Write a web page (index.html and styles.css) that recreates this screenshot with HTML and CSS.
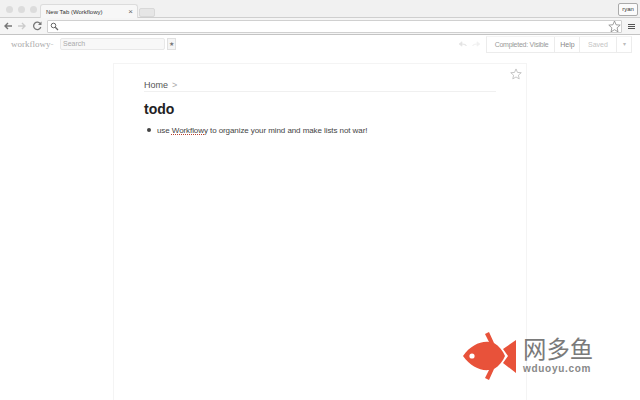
FILE: index.html
```html
<!DOCTYPE html>
<html lang="en">
<head>
<meta charset="utf-8">
<title>New Tab (Workflowy)</title>
<link rel="stylesheet" href="styles.css">
</head>
<body>
<div class="tabstrip">
  <div class="lights"><i></i><i></i><i></i></div>
  <div class="tab"><span class="tab-title">New Tab (Workflowy)</span><span class="tab-x">×</span></div>
  <div class="newtab"></div>
  <div class="user">ryan</div>
</div>
<div class="toolbar">
  <svg class="nav" width="45" height="16" viewBox="0 0 45 16">
    <path d="M3 8h7M6 5 3 8l3 3" fill="none" stroke="#777" stroke-width="1.400"/>
    <path d="M16 8h7M20 5l3 3-3 3" fill="none" stroke="#ccc" stroke-width="1.400"/>
    <path d="M38.500 6a3.700 3.700 0 1 0 .3 3" fill="none" stroke="#777" stroke-width="1.300"/>
    <path d="M39.500 3.500v3.500h-3.500z" fill="#777"/>
  </svg>
  <div class="omnibox">
    <svg width="9" height="9" viewBox="0 0 9 9"><circle cx="3.500" cy="3.500" r="2.300" fill="none" stroke="#666"/><path d="M5.300 5.300 8 8" stroke="#666" stroke-width="1.300"/></svg>
    <svg class="omni-star" width="13" height="13" viewBox="0 0 13 13"><path d="M6.500 1 8.100 4.800 12.200 5.100 9.100 7.800 10 11.800 6.500 9.700 3 11.800 3.900 7.800 .8 5.100 4.900 4.800Z" fill="#fff" stroke="#888" stroke-width=".8"/></svg>
  </div>
  <div class="menu"><i></i><i></i><i></i></div>
</div>
<div class="wf-header">
  <span class="logo">workflowy<span class="logo-dot">-</span></span>
  <div class="search">Search</div>
  <div class="star-btn">★</div>
  <div class="spacer"></div>
  <svg class="undo" width="24" height="8" viewBox="0 0 24 8">
    <path d="M1 4 4 1.800V6.200ZM4 4c3 0 4 .5 4.500 2" fill="#e4e4e4" stroke="#e4e4e4" stroke-width=".7"/>
    <path d="M22 4 19 1.800V6.200ZM19 4c-3 0-4 .5-4.500 2" fill="#f0f0f0" stroke="#f0f0f0" stroke-width=".7"/>
  </svg>
  <div class="actions">
    <span class="act completed">Completed: Visible</span>
    <span class="act help">Help</span>
    <span class="act saved">Saved</span>
    <span class="act more">▾</span>
  </div>
</div>
<main class="page">
  <svg class="page-star" width="12" height="12" viewBox="0 0 13 13"><path d="M6.500 1 8.100 4.800 12.200 5.100 9.100 7.800 10 11.800 6.500 9.700 3 11.800 3.900 7.800 .8 5.100 4.900 4.800Z" fill="none" stroke="#bbb" stroke-width=".9"/></svg>
  <div class="crumbs">Home<span class="sep">&gt;</span></div>
  <h1 class="title">todo</h1>
  <ul class="items">
    <li>use <span class="spell">Workflowy</span> to organize your mind and make lists not war!</li>
  </ul>
</main>
<div class="watermark">
  <svg width="56" height="48" viewBox="0 0 56 48">
    <path d="M1 24C8 14 18 9 27 10L23 2 27 0 32 11C37 14 41 19 43 24 41 29 37 34 32 37L27 48 23 46 27 38C18 39 8 34 1 24Z" fill="#e8523a"/>
    <path d="M54 8V41L41 31 46 24 41 17Z" fill="#e8523a"/>
    <circle cx="10" cy="24" r="2.600" fill="#fff"/>
  </svg>
  <div class="wm-text">
    <div class="wm-cn">网多鱼</div>
    <div class="wm-en">wduoyu.com</div>
  </div>
</div>
</body>
</html>
```
FILE: styles.css
```css
* { box-sizing: border-box; }
html, body { margin: 0; height: 400px; overflow: hidden; background: #fff; }
body { font-family: "Liberation Sans", Arial, sans-serif; position: relative; color: #222; }

.tabstrip { height: 18px; background: #f1f1f1; border-bottom: 1px solid #cfcfcf; display: flex; align-items: flex-end; padding-left: 6px; position: relative; }
.lights { display: flex; gap: 5px; align-self: flex-start; margin-top: 6px; width: 34px; }
.lights i { width: 7px; height: 7px; border-radius: 50%; background: #dcdcdc; }
.tab { width: 98px; height: 14px; background: #f7f7f7; border: 1px solid #dcdcdc; border-bottom: 0; border-radius: 3px 3px 0 0; display: flex; justify-content: space-between; align-items: center; padding: 0 4px 0 5px; margin-bottom: -1px; font-size: 6px; color: #333; }
.tab-x { font-size: 8px; color: #666; }
.newtab { width: 16px; height: 9px; margin-left: 1px; background: #e6e6e6; border: 1px solid #d8d8d8; border-radius: 2px; }
.user { position: absolute; right: 2px; top: 3px; width: 20px; height: 13px; background: #fbfbfb; border: 1px solid #aaa; border-radius: 2px; font-size: 6px; line-height: 11px; text-align: center; color: #333; }

.toolbar { height: 17px; background: #f5f5f5; border-bottom: 1px solid #c4c4c4; display: flex; align-items: center; }
.nav { flex: none; width: 47px; padding-left: 2px; }
.omnibox { flex: 1; height: 13px; background: #fff; border: 1px solid #d0d0d0; border-radius: 1px; display: flex; align-items: center; justify-content: space-between; padding: 0 0 0 2px; }
.menu { width: 18px; display: flex; flex-direction: column; gap: 1px; align-items: center; }
.menu i { width: 7px; height: 1px; background: #555; }

.wf-header { height: 20px; display: flex; align-items: center; padding: 0 8px 2px 11px; background: #fff; }
.logo { font-family: "Liberation Serif", serif; font-size: 9px; color: #aaa; width: 49px; white-space: nowrap; }
.logo-dot { color: #ccc; }
.search { width: 105px; height: 12px; border: 1px solid #e8e8e8; background: #f8f8f8; border-radius: 2px; font-size: 7px; line-height: 10px; color: #aaa; padding-left: 2px; }
.star-btn { width: 9px; height: 12px; margin-left: 2px; border: 1px solid #e0e0e0; background: #f5f5f5; font-size: 6px; line-height: 10px; text-align: center; color: #777; }
.spacer { flex: 1; }
.undo { margin-right: 4px; }
.actions { display: flex; height: 17px; border: 1px solid #ececec; border-top: 1px solid #f4f4f4; font-size: 7px; line-height: 15px; color: #999; white-space: nowrap; }
.act { border-left: 1px solid #ececec; text-align: center; }
.act:first-child { border-left: 0; }
.completed { width: 67px; letter-spacing: -.25px; padding-left: 2px; }
.help { width: 25px; color: #888; padding-left: 1px; }
.saved { width: 37px; color: #c4c4c4; }
.more { width: 15px; color: #bbb; font-size: 6px; }

.page { position: relative; width: 414px; height: 346px; margin: 8px 0 0 113px; border: 1px solid #f4f4f4; border-bottom: 0; padding: 15px 30px 0; }
.page-star { position: absolute; right: 4px; top: 4px; }
.crumbs { font-size: 9px; line-height: 12px; color: #555; height: 13px; border-bottom: 1px solid #f0f0f0; }
.sep { margin-left: 4px; color: #aaa; }
.title { margin: 8px 0 0; font-size: 14px; line-height: 18px; font-weight: 700; color: #222; }
.items { list-style: none; margin: 7px 0 0; padding: 0 0 0 13px; font-size: 8px; line-height: 12px; color: #444; letter-spacing: -.08px; }
.items li::before { content: ""; display: inline-block; width: 4px; height: 4px; margin: 0 6px 1px -10px; border-radius: 50%; background: #444; }
.spell { text-decoration: underline dotted #b5412f; text-decoration-thickness: 1px; text-underline-offset: 1px; }

.watermark { position: absolute; left: 462px; top: 332px; display: flex; gap: 5px; }
.wm-text { padding-top: 3px; }
.wm-cn { font-family: "Noto Sans CJK SC", sans-serif; font-size: 23.4px; line-height: 26px; color: #7a7a7a; white-space: nowrap; }
.wm-en { font-size: 10px; line-height: 12px; font-weight: 700; color: #888; letter-spacing: .7px; margin-top: 2px; }
```
